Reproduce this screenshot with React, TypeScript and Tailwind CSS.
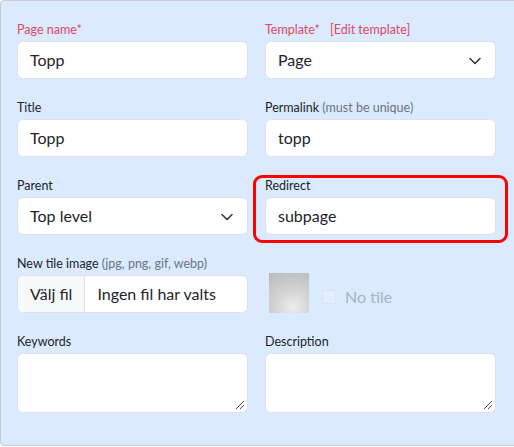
import React from "react";

const font = { fontFamily: '"Segoe UI", Lato, "Noto Sans", sans-serif' };

function Chevron() {
  return (
    <svg width="12" height="8" viewBox="0 0 12 8" className="absolute right-[14px] top-[15px]">
      <path d="M1 1.5l5 5 5-5" fill="none" stroke="#343a40" strokeWidth="1.6" strokeLinecap="round" strokeLinejoin="round" />
    </svg>
  );
}

function Label({ children, red }: { children: React.ReactNode; red?: boolean }) {
  return (
    <div className={`h-[20px] leading-[20px] text-[12.5px] mb-[1px] whitespace-nowrap ${red ? "text-[#e0485f]" : "text-[#212529]"}`}>
      {children}
    </div>
  );
}

function Input({ value }: { value: string }) {
  return (
    <div className="h-[38px] bg-white border border-[#dee2e6] rounded-[6px] px-[12px] flex items-center text-[16px] text-[#212529]">
      {value}
    </div>
  );
}

function Select({ value }: { value: string }) {
  return (
    <div className="relative h-[38px] bg-white border border-[#dee2e6] rounded-[6px] px-[12px] flex items-center text-[16px] text-[#212529]">
      {value}
      <Chevron />
    </div>
  );
}

function Textarea() {
  return (
    <div className="relative h-[60px] bg-white border border-[#dee2e6] rounded-[6px]">
      <svg width="10" height="10" viewBox="0 0 10 10" className="absolute right-[2px] bottom-[2px]">
        <path d="M9 1L1 9M9 5L5 9" stroke="#555" strokeWidth="1" />
      </svg>
    </div>
  );
}

export default function App() {
  return (
    <div className="w-[514px] h-[447px] overflow-hidden bg-white" style={font}>
      <div className="w-[540px] h-[446px] bg-[#dbeafe] border border-[#c8ccd2] rounded-[4px] pl-[16px] pt-[19px]">
        <div className="grid grid-cols-[231px_231px] gap-x-[17px] gap-y-[19px]">
          <div>
            <Label red>Page name*</Label>
            <Input value="Topp" />
          </div>
          <div>
            <Label red>
              Template*<span className="ml-[10px]">[Edit template]</span>
            </Label>
            <Select value="Page" />
          </div>
          <div>
            <Label>Title</Label>
            <Input value="Topp" />
          </div>
          <div>
            <Label>
              Permalink <span className="text-[#6c757d]">(must be unique)</span>
            </Label>
            <Input value="topp" />
          </div>
          <div>
            <Label>Parent</Label>
            <Select value="Top level" />
          </div>
          <div className="relative">
            <div className="absolute left-[-12px] right-[-12px] top-[-1px] bottom-[-8px] border-[3px] border-[#ff0000] rounded-[9px]" />
            <Label>Redirect</Label>
            <Input value="subpage" />
          </div>
          <div>
            <Label>
              New tile image <span className="text-[#6c757d]">(jpg, png, gif, webp)</span>
            </Label>
            <div className="h-[38px] bg-white border border-[#dee2e6] rounded-[6px] flex items-center text-[16px] text-[#212529] overflow-hidden">
              <div className="h-full px-[12px] flex items-center bg-[#f8f9fa] border-r border-[#dee2e6]">Välj fil</div>
              <div className="pl-[12px]">Ingen fil har valts</div>
            </div>
          </div>
          <div className="flex items-end">
            <div className="flex items-center ml-[4px] mb-[0px]">
              <div
                className="w-[40px] h-[40px]"
                style={{ background: "radial-gradient(circle at 60% 85%, #ececec 0%, #d2d2d2 45%, #b9b9b9 100%)" }}
              />
              <div className="ml-[13px] mt-[8px] w-[14px] h-[14px] rounded-[3px] bg-[#e4eefd] border border-[#d8e3f5]" />
              <div className="ml-[9px] mt-[8px] text-[16px] text-[#a8b2c2]">No tile</div>
            </div>
          </div>
          <div>
            <Label>Keywords</Label>
            <Textarea />
          </div>
          <div>
            <Label>Description</Label>
            <Textarea />
          </div>
        </div>
      </div>
    </div>
  );
}
